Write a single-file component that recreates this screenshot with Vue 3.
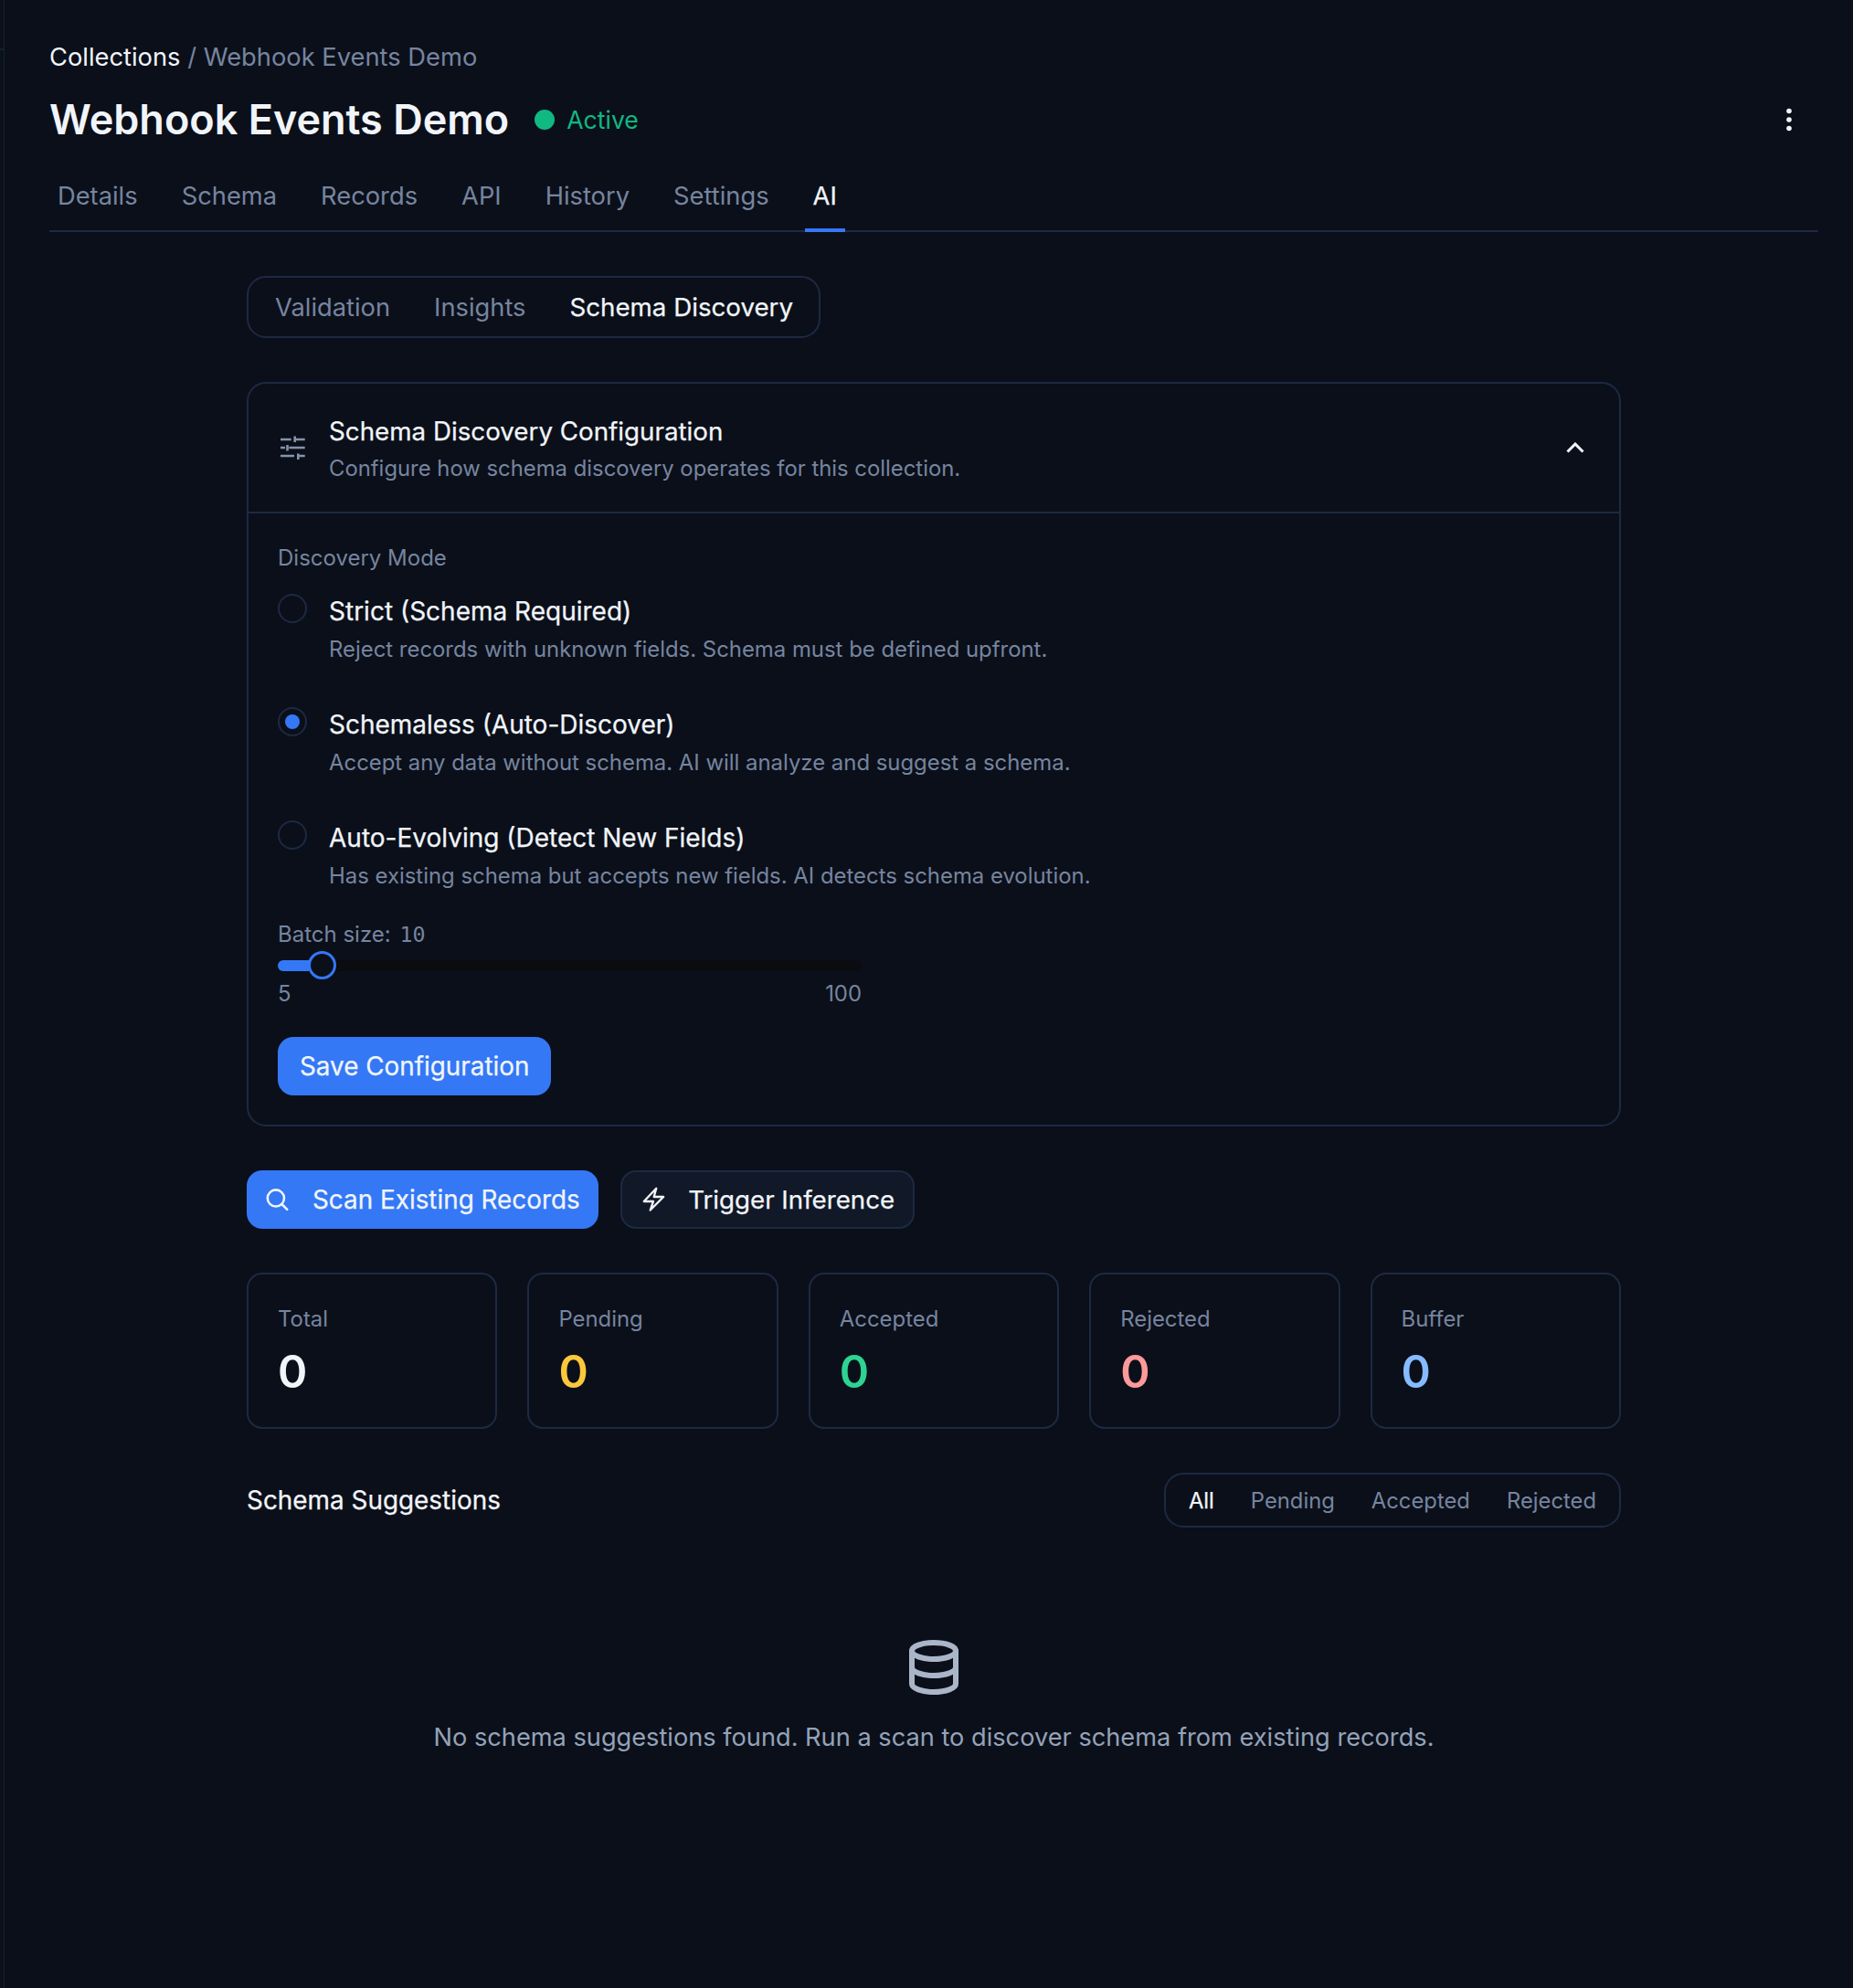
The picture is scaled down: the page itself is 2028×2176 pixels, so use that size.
<template>
  <div class="shell">
    <aside class="rail"><div class="rail-top"></div></aside>
    <div class="page">
      <div class="crumbs"><span class="crumb-link">Collections</span> / Webhook Events Demo</div>

      <div class="title-row">
        <h1>Webhook Events Demo</h1>
        <span class="status-dot"></span>
        <span class="status-text">Active</span>
        <svg class="more" viewBox="0 0 6 26" fill="currentColor">
          <circle cx="3" cy="3.5" r="2.8" />
          <circle cx="3" cy="13" r="2.8" />
          <circle cx="3" cy="22.5" r="2.8" />
        </svg>
      </div>

      <div class="tabs">
        <div v-for="t in tabs" :key="t" class="tab" :class="{ active: t === 'AI' }">{{ t }}</div>
      </div>

      <div class="content">
        <div class="subtabs">
          <span v-for="t in subTabs" :key="t" :class="{ on: t === 'Schema Discovery' }">{{ t }}</span>
        </div>

        <section class="card">
          <header class="card-head">
            <svg class="sliders" viewBox="0 0 27 27" fill="none" stroke="currentColor" stroke-width="2.6">
              <path d="M0 4h11.7M16.7 4h10M15.7 .5v6.5" />
              <path d="M0 13h5M9.3 13h17.4M7.5 10v6.5" />
              <path d="M0 22h15M20.5 22h6.2M19.3 19.5V26" />
            </svg>
            <div class="head-text">
              <div class="card-title">Schema Discovery Configuration</div>
              <div class="card-sub">Configure how schema discovery operates for this collection.</div>
            </div>
            <svg class="chevron" viewBox="0 0 20 12" fill="none" stroke="currentColor" stroke-width="3">
              <path d="M1.5 10.5 10 2l8.5 8.5" />
            </svg>
          </header>

          <div class="card-body">
            <div class="field-label">Discovery Mode</div>
            <div v-for="m in modes" :key="m.name" class="mode">
              <span class="radio" :class="{ checked: m.checked }"></span>
              <div>
                <div class="mode-name">{{ m.name }}</div>
                <div class="mode-desc">{{ m.desc }}</div>
              </div>
            </div>

            <div class="batch">
              <div class="field-label">Batch size: <span class="mono">10</span></div>
              <div class="slider">
                <div class="track"><div class="fill" :style="{ width: '34px' }"></div></div>
                <div class="thumb"></div>
              </div>
              <div class="range"><span>5</span><span>100</span></div>
            </div>

            <button class="btn-primary save">Save Configuration</button>
          </div>
        </section>

        <div class="actions">
          <button class="btn-primary scan">
            <svg class="btn-icon" viewBox="0 0 24 24" fill="none" stroke="currentColor" stroke-width="2.2" stroke-linecap="round" stroke-linejoin="round">
              <circle cx="10.2" cy="10.7" r="7.8" />
              <path d="m16 16.5 4.8 4.8" />
            </svg>
            Scan Existing Records
          </button>
          <button class="btn-dark">
            <svg class="btn-icon" viewBox="0 0 24 24" fill="none" stroke="currentColor" stroke-width="2" stroke-linecap="round" stroke-linejoin="round">
              <path d="M14.8 1.5 3.2 13.7H12l-2.8 8.2L21.6 9.4h-9l2.2-7.9z" />
            </svg>
            Trigger Inference
          </button>
        </div>

        <div class="stats">
          <div v-for="s in stats" :key="s.label" class="stat">
            <div class="stat-label">{{ s.label }}</div>
            <div class="stat-value" :class="s.tone">0</div>
          </div>
        </div>

        <div class="suggest-row">
          <div class="suggest-title">Schema Suggestions</div>
          <div class="filters">
            <span v-for="f in filters" :key="f" :class="{ on: f === 'All' }">{{ f }}</span>
          </div>
        </div>

        <div class="empty">
          <svg class="db" viewBox="0 0 24 24" fill="none" stroke="currentColor" stroke-width="2" stroke-linecap="round" stroke-linejoin="round">
            <path d="M4 6a8 3 0 1 0 16 0a8 3 0 1 0 -16 0" />
            <path d="M4 6v6a8 3 0 0 0 16 0v-6" />
            <path d="M4 12v6a8 3 0 0 0 16 0v-6" />
          </svg>
          <p>No schema suggestions found. Run a scan to discover schema from existing records.</p>
        </div>
      </div>
    </div>
  </div>
</template>

<script setup>
const tabs = ['Details', 'Schema', 'Records', 'API', 'History', 'Settings', 'AI']
const subTabs = ['Validation', 'Insights', 'Schema Discovery']
const filters = ['All', 'Pending', 'Accepted', 'Rejected']

const modes = [
  { name: 'Strict (Schema Required)', desc: 'Reject records with unknown fields. Schema must be defined upfront.' },
  { name: 'Schemaless (Auto-Discover)', desc: 'Accept any data without schema. AI will analyze and suggest a schema.', checked: true },
  { name: 'Auto-Evolving (Detect New Fields)', desc: 'Has existing schema but accepts new fields. AI detects schema evolution.' }
]

const stats = [
  { label: 'Total', tone: 'white' },
  { label: 'Pending', tone: 'yellow' },
  { label: 'Accepted', tone: 'green' },
  { label: 'Rejected', tone: 'red' },
  { label: 'Buffer', tone: 'blue' }
]
</script>

<style>
html,
body {
  margin: 0;
  background: #0b0f1a;
}
</style>

<style scoped>
* {
  box-sizing: border-box;
}

.shell {
  display: flex;
  min-height: 2176px;
  font-family: Inter, "Noto Sans", sans-serif;
  font-size: 27.3px;
  color: #f1f5f9;
}

.rail {
  flex: none;
  width: 5px;
  border-right: 1px solid #15202f;
  background: #0a1119;
}

.rail-top {
  height: 55px;
  border-bottom: 2px solid #15202f;
}

.page {
  flex: 1;
  min-width: 0;
  padding: 46px 38px 0 49px;
  background: #0b0f1a;
}

.crumbs {
  line-height: 34px;
  color: #76859f;
}

.crumb-link {
  color: #f1f5f9;
}

.title-row {
  display: flex;
  align-items: center;
  height: 60px;
  margin-top: 21px;
}

h1 {
  margin: 0;
  font-size: 45px;
  font-weight: 600;
  line-height: 60px;
}

.status-dot {
  width: 22px;
  height: 22px;
  margin-left: 28px;
  border-radius: 50%;
  background: #10b981;
}

.status-text {
  margin-left: 13px;
  font-size: 26.6px;
  color: #10b981;
}

.more {
  width: 6px;
  height: 26px;
  margin-left: auto;
  margin-right: 29px;
  color: #f1f5f9;
}

.tabs {
  display: flex;
  gap: 30px;
  margin-top: 37px;
  border-bottom: 2px solid #1c2a42;
}

.tab {
  margin-bottom: -2px;
  padding: 0 9px 18px;
  border-bottom: 4px solid transparent;
  line-height: 34px;
  color: #76859f;
}

.tab.active {
  border-bottom-color: #3478f6;
  color: #f1f5f9;
  -webkit-text-stroke: 0.25px #f1f5f9;
}

.content {
  width: 1504px;
  margin: 48px auto 0;
}

.subtabs {
  display: inline-flex;
  align-items: center;
  gap: 48px;
  height: 68px;
  padding: 0 28px 0 29px;
  border: 2px solid #1c2a42;
  border-radius: 21px;
  color: #76859f;
  vertical-align: top;
}

.subtabs .on {
  font-size: 27.7px;
  color: #f1f5f9;
  -webkit-text-stroke: 0.25px #f1f5f9;
}

.filters .on {
  color: #f1f5f9;
  -webkit-text-stroke: 0.25px #f1f5f9;
}

.card {
  margin-top: 48px;
  border: 2px solid #1c2a42;
  border-radius: 21px;
}

.card-head {
  display: flex;
  align-items: center;
  height: 142px;
  padding: 0 27px 0 32px;
  border-bottom: 2px solid #1c2a42;
}

.sliders {
  flex: none;
  width: 27px;
  height: 27px;
  margin-left: 2.7px;
  color: #8593ab;
}

.head-text {
  margin-left: 26.3px;
  padding-top: 2px;
}

.card-title {
  font-size: 27.75px;
  line-height: 34px;
  -webkit-text-stroke: 0.25px #f1f5f9;
}

.card-sub {
  margin-top: 9px;
  font-size: 23.85px;
  line-height: 30px;
  color: #76859f;
}

.chevron {
  width: 20px;
  height: 12px;
  margin-left: auto;
  margin-right: 11px;
  color: #f1f5f9;
}

.card-body {
  padding: 34px 32px 32px;
}

.field-label {
  font-size: 24px;
  line-height: 30px;
  color: #76859f;
}

.mono {
  margin-left: 3px;
  font-family: "DejaVu Sans Mono", "Liberation Mono", monospace;
  font-size: 23.3px;
}

.mode {
  display: flex;
  gap: 24px;
  height: 124px;
  padding-top: 26px;
}

.radio {
  position: relative;
  flex: none;
  width: 32px;
  height: 32px;
  margin-top: -2px;
  border: 2px solid #1c2a42;
  border-radius: 50%;
}

.radio.checked::after {
  content: "";
  position: absolute;
  left: 6px;
  top: 6px;
  width: 16px;
  height: 16px;
  border-radius: 50%;
  background: #3478f6;
}

.mode-name {
  font-size: 28px;
  line-height: 34px;
  -webkit-text-stroke: 0.25px #f1f5f9;
}

.mode-desc {
  margin-top: 10px;
  font-size: 23.9px;
  line-height: 30px;
  color: #76859f;
}

.batch {
  width: 639px;
  margin-top: 10px;
}

.slider {
  position: relative;
  height: 31px;
  margin-top: 3px;
}

.track {
  position: absolute;
  left: 0;
  right: 0;
  top: 10px;
  height: 12px;
  border-radius: 6px;
  background: #0a0c10;
  overflow: hidden;
}

.fill {
  height: 100%;
  background: #3478f6;
}

.thumb {
  position: absolute;
  left: 33px;
  top: 0;
  width: 31px;
  height: 31px;
  border: 3px solid #3478f6;
  border-radius: 50%;
  background: #0b0f1a;
}

.range {
  display: flex;
  justify-content: space-between;
  margin-top: 1px;
  font-size: 23.9px;
  line-height: 30px;
  color: #76859f;
}

button {
  font: inherit;
  font-size: 27.85px;
  color: #f1f5f9;
  cursor: pointer;
  -webkit-text-stroke: 0.25px #f1f5f9;
}

.btn-primary {
  border: none;
  border-radius: 17px;
  background: #3478f6;
}

.save {
  display: block;
  height: 64px;
  margin-top: 32px;
  padding: 0 24px;
}

.actions {
  display: flex;
  gap: 24px;
  margin-top: 48px;
}

.scan,
.btn-dark {
  display: flex;
  align-items: center;
  height: 64px;
  padding: 0 20px;
}

.btn-dark {
  padding: 0 19.5px 0 20.5px;
  border: 2px solid #1c2a42;
  border-radius: 17px;
  background: #111827;
  font-size: 27.7px;
}

.btn-icon {
  flex: none;
  width: 28px;
  height: 28px;
  margin-right: 24px;
}

.stats {
  display: grid;
  grid-template-columns: repeat(5, 1fr);
  gap: 33px;
  margin-top: 48px;
}

.stat {
  height: 171px;
  padding: 34px 32px 0;
  border: 2px solid #1c2a42;
  border-radius: 17px;
}

.stat-label {
  font-size: 23.9px;
  line-height: 30px;
  color: #76859f;
}

.stat-value {
  margin-top: 13px;
  font-size: 49px;
  font-weight: 600;
  line-height: 60px;
}

.white { color: #f1f5f9; }
.yellow { color: #fbc83c; }
.green { color: #2dd391; }
.red { color: #fc9a9a; }
.blue { color: #86bbff; }

.suggest-row {
  display: flex;
  align-items: center;
  justify-content: space-between;
  margin-top: 48px;
}

.suggest-title {
  font-size: 27.9px;
  -webkit-text-stroke: 0.25px #f1f5f9;
}

.filters {
  display: flex;
  align-items: center;
  gap: 40px;
  height: 60px;
  padding: 0 25px;
  border: 2px solid #1c2a42;
  border-radius: 21px;
  font-size: 23.8px;
  color: #76859f;
}

.empty {
  display: flex;
  flex-direction: column;
  align-items: center;
  padding-top: 117px;
}

.db {
  width: 72px;
  height: 72px;
  color: #aab6c8;
}

.empty p {
  margin: 23px 0 0;
  font-size: 27.2px;
  line-height: 36px;
  color: #94a3b8;
}
</style>
